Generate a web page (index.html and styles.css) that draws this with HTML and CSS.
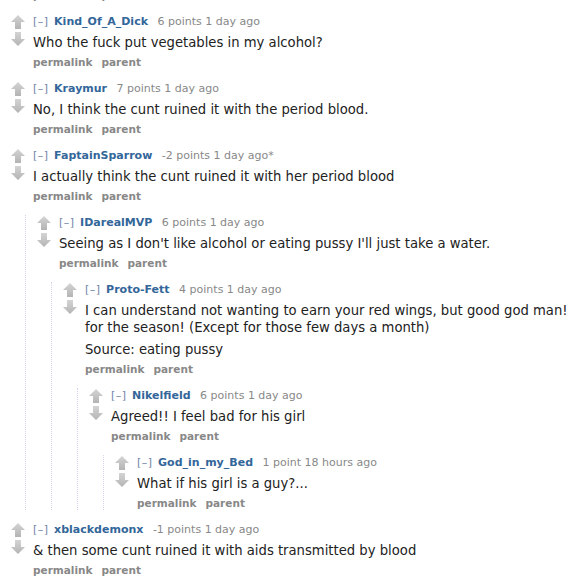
FILE: index.html
```html
<html>
<head>
   <link rel="stylesheet" href="styles.css">
</head>
<body>
<svg class="defs" width="0" height="0">
  <defs>
    <linearGradient id="grey" x1="0" y1="0" x2="0" y2="1">
      <stop offset="0" stop-color="#d4d4d4"/>
      <stop offset="1" stop-color="#b4b4b4"/>
    </linearGradient>
    <symbol id="up" viewBox="0 0 14 14">
      <path d="M7 0 L14 7 L10 7 L10 14 L4 14 L4 7 L0 7 Z" fill="url(#grey)"/>
    </symbol>
    <symbol id="down" viewBox="0 0 14 14">
      <path d="M4 0 L10 0 L10 7 L14 7 L7 14 L0 7 L4 7 Z" fill="url(#grey)"/>
    </symbol>
  </defs>
</svg>

<div class="thread">
  <ul class="buttons tail"><li>permalink</li><li>parent</li></ul>

  <div class="comment">
    <div class="row">
      <div class="midcol"><svg class="arrow"><use href="#up"/></svg><svg class="arrow"><use href="#down"/></svg></div>
      <div class="entry">
        <p class="tagline"><span class="expand">[–]</span> <span class="author">Kind_Of_A_Dick</span> <span>6 points</span> <span>1 day ago</span></p>
        <div class="md"><p>Who the fuck put vegetables in my alcohol?</p></div>
        <ul class="buttons"><li>permalink</li><li>parent</li></ul>
      </div>
    </div>
  </div>

  <div class="comment">
    <div class="row">
      <div class="midcol"><svg class="arrow"><use href="#up"/></svg><svg class="arrow"><use href="#down"/></svg></div>
      <div class="entry">
        <p class="tagline"><span class="expand">[–]</span> <span class="author">Kraymur</span> <span>7 points</span> <span>1 day ago</span></p>
        <div class="md"><p>No, I think the cunt ruined it with the period blood.</p></div>
        <ul class="buttons"><li>permalink</li><li>parent</li></ul>
      </div>
    </div>
  </div>

  <div class="comment">
    <div class="row">
      <div class="midcol"><svg class="arrow"><use href="#up"/></svg><svg class="arrow"><use href="#down"/></svg></div>
      <div class="entry">
        <p class="tagline"><span class="expand">[–]</span> <span class="author">FaptainSparrow</span> <span>-2 points</span> <span>1 day ago*</span></p>
        <div class="md"><p>I actually think the cunt ruined it with her period blood</p></div>
        <ul class="buttons"><li>permalink</li><li>parent</li></ul>
      </div>
    </div>
    <div class="child">
      <div class="comment">
        <div class="row">
          <div class="midcol"><svg class="arrow"><use href="#up"/></svg><svg class="arrow"><use href="#down"/></svg></div>
          <div class="entry">
            <p class="tagline"><span class="expand">[–]</span> <span class="author">IDarealMVP</span> <span>6 points</span> <span>1 day ago</span></p>
            <div class="md"><p>Seeing as I don't like alcohol or eating pussy I'll just take a water.</p></div>
            <ul class="buttons"><li>permalink</li><li>parent</li></ul>
          </div>
        </div>
        <div class="child">
          <div class="comment">
            <div class="row">
              <div class="midcol"><svg class="arrow"><use href="#up"/></svg><svg class="arrow"><use href="#down"/></svg></div>
              <div class="entry">
                <p class="tagline"><span class="expand">[–]</span> <span class="author">Proto-Fett</span> <span>4 points</span> <span>1 day ago</span></p>
                <div class="md">
                  <p>I can understand not wanting to earn your red wings, but good god man!<br>for the season! (Except for those few days a month)</p>
                  <p>Source: eating pussy</p>
                </div>
                <ul class="buttons"><li>permalink</li><li>parent</li></ul>
              </div>
            </div>
            <div class="child">
              <div class="comment">
                <div class="row">
                  <div class="midcol"><svg class="arrow"><use href="#up"/></svg><svg class="arrow"><use href="#down"/></svg></div>
                  <div class="entry">
                    <p class="tagline"><span class="expand">[–]</span> <span class="author">Nikelfield</span> <span>6 points</span> <span>1 day ago</span></p>
                    <div class="md"><p>Agreed!! I feel bad for his girl</p></div>
                    <ul class="buttons"><li>permalink</li><li>parent</li></ul>
                  </div>
                </div>
                <div class="child">
                  <div class="comment">
                    <div class="row">
                      <div class="midcol"><svg class="arrow"><use href="#up"/></svg><svg class="arrow"><use href="#down"/></svg></div>
                      <div class="entry">
                        <p class="tagline"><span class="expand">[–]</span> <span class="author">God_in_my_Bed</span> <span>1 point</span> <span>18 hours ago</span></p>
                        <div class="md"><p>What if his girl is a guy?...</p></div>
                        <ul class="buttons"><li>permalink</li><li>parent</li></ul>
                      </div>
                    </div>
                  </div>
                </div>
              </div>
            </div>
          </div>
        </div>
      </div>
    </div>
  </div>

  <div class="comment">
    <div class="row">
      <div class="midcol"><svg class="arrow"><use href="#up"/></svg><svg class="arrow"><use href="#down"/></svg></div>
      <div class="entry">
        <p class="tagline"><span class="expand">[–]</span> <span class="author">xblackdemonx</span> <span>-1 points</span> <span>1 day ago</span></p>
        <div class="md"><p>&amp; then some cunt ruined it with aids transmitted by blood</p></div>
        <ul class="buttons"><li>permalink</li><li>parent</li></ul>
      </div>
    </div>
  </div>
</div>
</body>
</html>
```

FILE: styles.css
```css
  body {
     margin: 0;
     background: #fff;
     font: 10px "DejaVu Sans", Verdana, sans-serif;
     overflow: hidden;
  }

  .defs {
     position: absolute;
  }

  .thread {
     margin-top: -12px;
     white-space: nowrap;
  }

  .comment {
     margin-top: 12px;
  }

  .row {
     display: flex;
  }

  .midcol {
     flex: none;
     width: 22px;
     padding: 1px 0 0 11px;
     display: flex;
     flex-direction: column;
     gap: 3px;
  }

  .arrow {
     width: 14px;
     height: 14px;
  }

  .tagline {
     margin: 0;
     padding-top: 1px;
     line-height: 14px;
     font-size: 11px;
     color: #888;
  }

  .expand {
     color: #7085a8;
     margin-right: 2px;
     letter-spacing: 0.5px;
  }

  .author {
     color: #369;
     font-weight: bold;
     margin-right: 6px;
  }

  .md {
     font-size: 13.2px;
     color: #222;
  }

  .md p {
     margin: 5px 0 4px;
     line-height: 17px;
  }

  .buttons {
     list-style: none;
     margin: 0;
     padding: 0;
     display: flex;
     line-height: 14px;
     font-size: 10.5px;
     font-weight: bold;
     color: #888;
  }

  .buttons li {
     padding-right: 9px;
  }

  .tail {
     padding-left: 33px;
  }

  .child {
     margin-left: 25px;
     border-left: 1px dotted #d4d4ee;
  }
```
